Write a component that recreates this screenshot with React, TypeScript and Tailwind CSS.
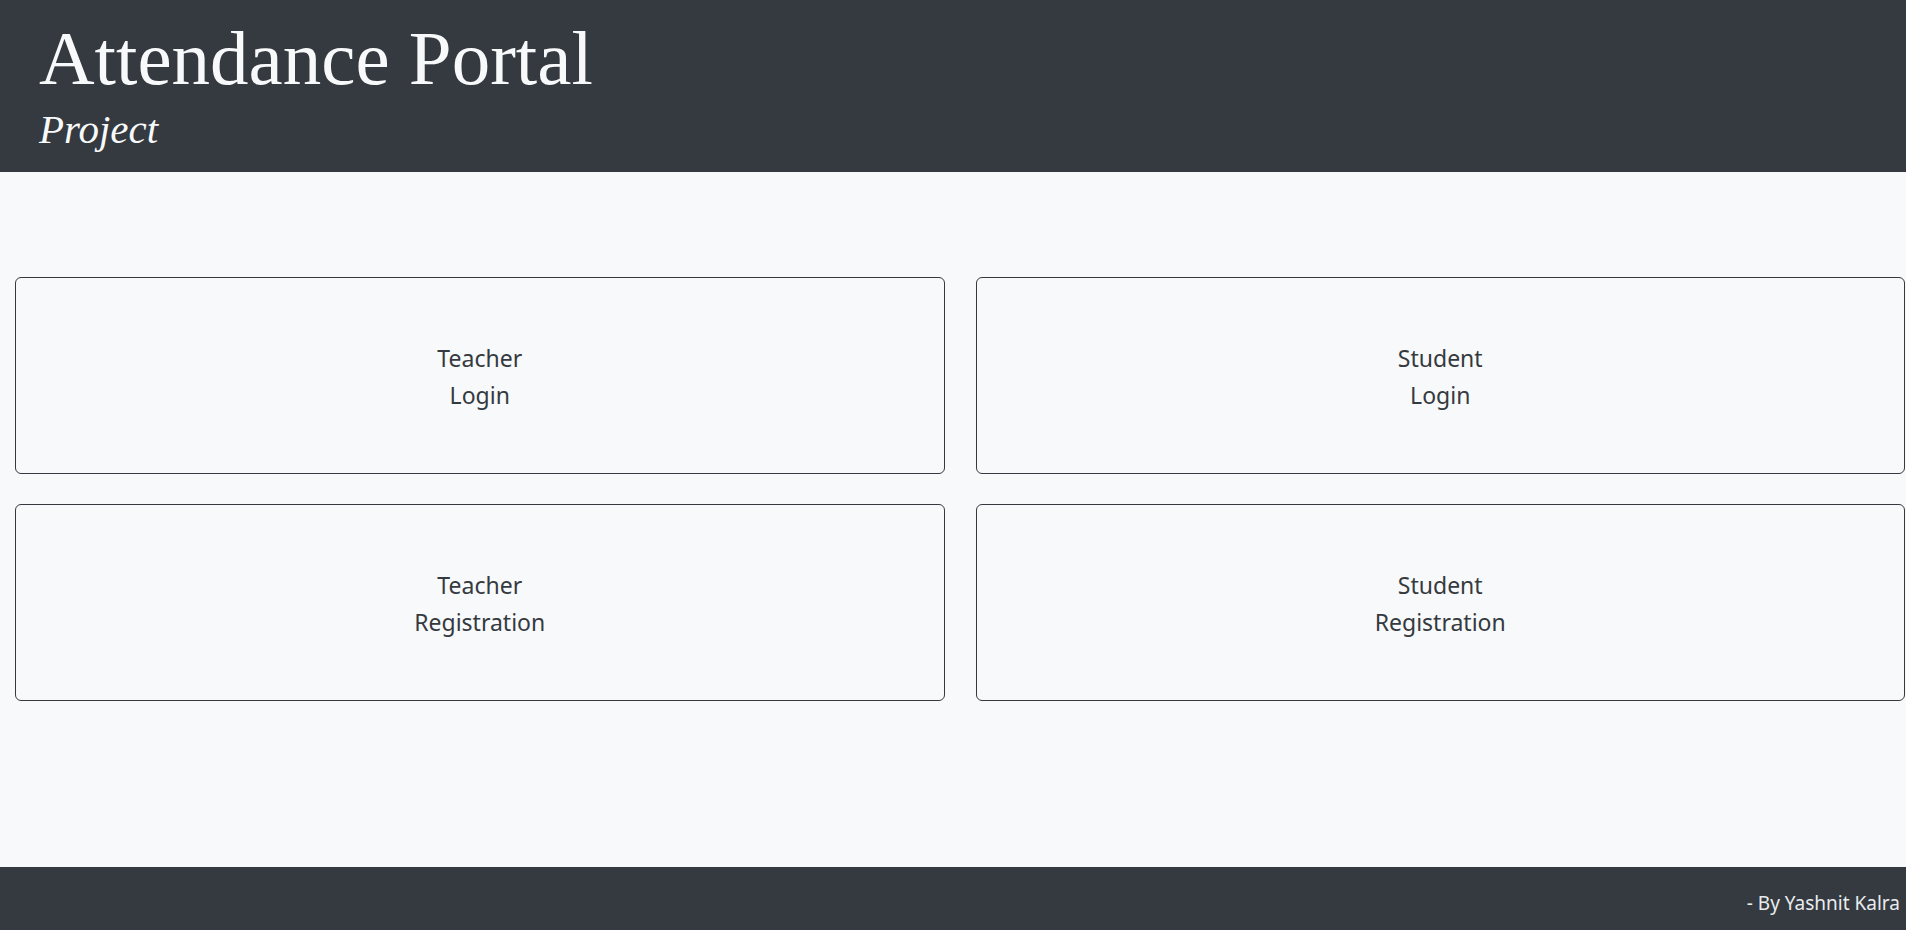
import React from "react";

const cards = [
  ["Teacher", "Login"],
  ["Student", "Login"],
  ["Teacher", "Registration"],
  ["Student", "Registration"],
];

export default function App() {
  return (
    <div className="flex flex-col h-[930px] bg-[#f8f9fa]">
      <header className="h-[172px] shrink-0 bg-[#343a40] pl-[39px] pt-[20px] text-[#f8f9fa] font-['Liberation_Serif',serif]">
        <h1 className="text-[77px] leading-none">Attendance Portal</h1>
        <p className="mt-[12px] text-[41px] leading-none italic">Project</p>
      </header>

      <main className="flex-1 pt-[105px] pl-[15px] pr-[1px]">
        <div className="grid grid-cols-2 gap-x-[31px] gap-y-[30px]">
          {cards.map(([a, b]) => (
            <div
              key={a + b}
              className="h-[197px] pt-[2px] flex flex-col items-center justify-center border border-[#343a40] rounded-[6px] text-[23px] leading-[37px] text-[#343a40] font-['Noto_Sans',sans-serif] cursor-pointer"
            >
              <span>{a}</span>
              <span>{b}</span>
            </div>
          ))}
        </div>
      </main>

      <footer className="h-[63px] shrink-0 bg-[#343a40] flex items-center justify-end pt-[10px] pr-[6px] text-[19px] text-[#e9ecef] font-['Noto_Sans',sans-serif]">
        - By Yashnit Kalra
      </footer>
    </div>
  );
}
